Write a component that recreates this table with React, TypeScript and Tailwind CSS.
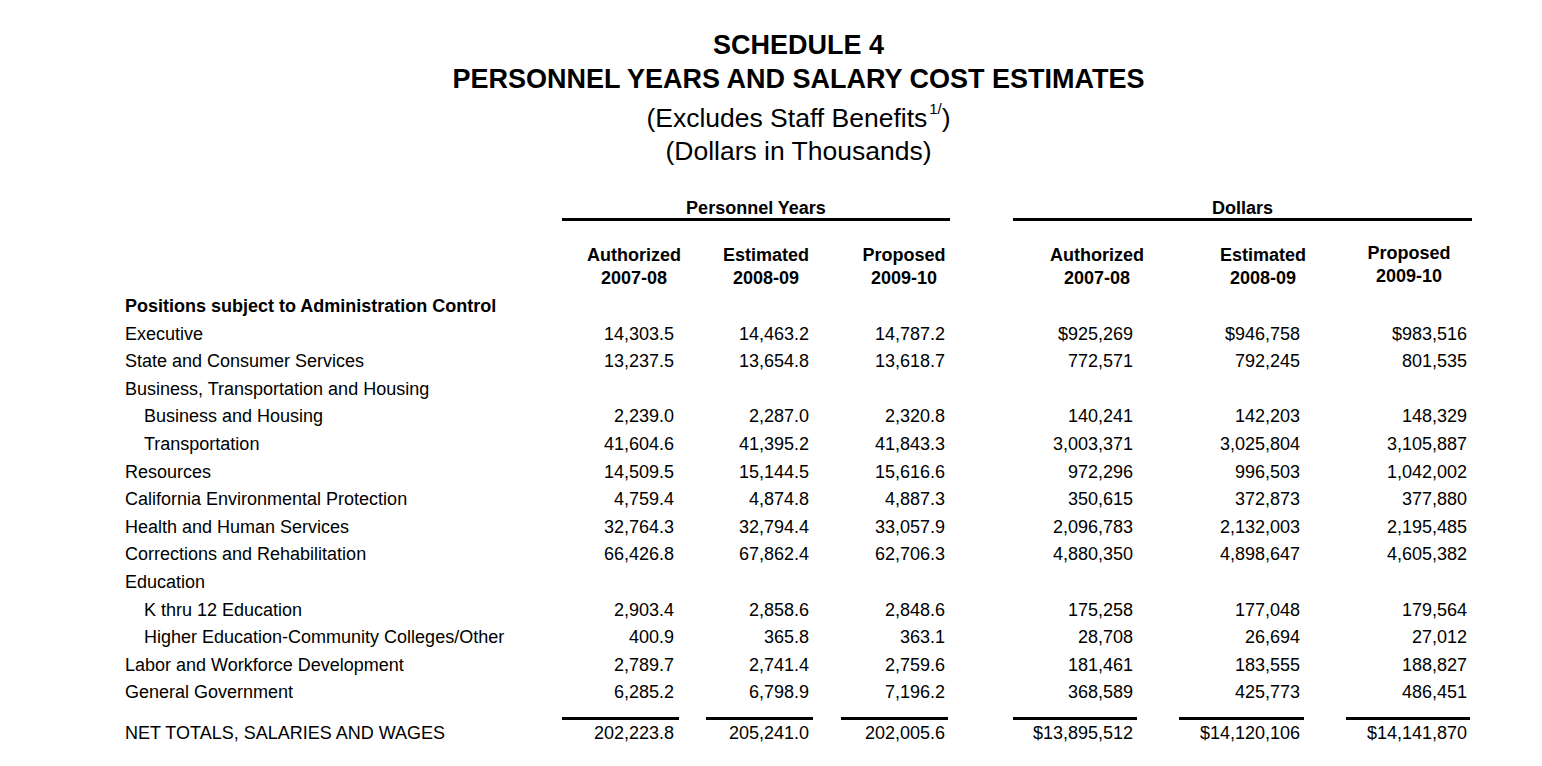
import React from "react";

interface Row {
	label: string;
	indent?: boolean;
	bold?: boolean;
	values?: string[];
}

const rows: Row[] = [
	{ label: "Positions subject to Administration Control", bold: true },
	{ label: "Executive", values: ["14,303.5", "14,463.2", "14,787.2", "$925,269", "$946,758", "$983,516"] },
	{ label: "State and Consumer Services", values: ["13,237.5", "13,654.8", "13,618.7", "772,571", "792,245", "801,535"] },
	{ label: "Business, Transportation and Housing" },
	{ label: "Business and Housing", indent: true, values: ["2,239.0", "2,287.0", "2,320.8", "140,241", "142,203", "148,329"] },
	{ label: "Transportation", indent: true, values: ["41,604.6", "41,395.2", "41,843.3", "3,003,371", "3,025,804", "3,105,887"] },
	{ label: "Resources", values: ["14,509.5", "15,144.5", "15,616.6", "972,296", "996,503", "1,042,002"] },
	{ label: "California Environmental Protection", values: ["4,759.4", "4,874.8", "4,887.3", "350,615", "372,873", "377,880"] },
	{ label: "Health and Human Services", values: ["32,764.3", "32,794.4", "33,057.9", "2,096,783", "2,132,003", "2,195,485"] },
	{ label: "Corrections and Rehabilitation", values: ["66,426.8", "67,862.4", "62,706.3", "4,880,350", "4,898,647", "4,605,382"] },
	{ label: "Education" },
	{ label: "K thru 12 Education", indent: true, values: ["2,903.4", "2,858.6", "2,848.6", "175,258", "177,048", "179,564"] },
	{ label: "Higher Education-Community Colleges/Other", indent: true, values: ["400.9", "365.8", "363.1", "28,708", "26,694", "27,012"] },
	{ label: "Labor and Workforce Development", values: ["2,789.7", "2,741.4", "2,759.6", "181,461", "183,555", "188,827"] },
	{ label: "General Government", values: ["6,285.2", "6,798.9", "7,196.2", "368,589", "425,773", "486,451"] },
];

const totals = ["202,223.8", "205,241.0", "202,005.6", "$13,895,512", "$14,120,106", "$14,141,870"];

// column geometry: margin before, width, right padding
const cols = [
	"ml-0 w-[117px] pr-[5px]",
	"ml-[27px] w-[107px] pr-[4px]",
	"ml-[28px] w-[107px] pr-[3px]",
	"ml-[65px] w-[124px] pr-[4px]",
	"ml-[42px] w-[125px] pr-[4px]",
	"ml-[42px] w-[124px] pr-[3px]",
];

const heads = [
	{ cls: "ml-[12px]", top: "Authorized", year: "2007-08" },
	{ cls: "ml-[12px]", top: "Estimated", year: "2008-09" },
	{ cls: "ml-[18px]", top: "Proposed", year: "2009-10" },
	{ cls: "ml-[73px]", top: "Authorized", year: "2007-08" },
	{ cls: "ml-[46px]", top: "Estimated", year: "2008-09" },
	{ cls: "ml-[26px] -mt-[2px]", top: "Proposed", year: "2009-10" },
];

const App = () => {
	return (
		<div
			className="min-h-screen w-full bg-white text-black"
			style={{ fontFamily: '"Liberation Sans", Arial, sans-serif' }}
		>
			<div className="ml-[125px] w-[1347px] pt-[28px]">
				<div className="text-center text-[27px] font-bold leading-[34px]">
					<div>SCHEDULE 4</div>
					<div>PERSONNEL YEARS AND SALARY COST ESTIMATES</div>
				</div>
				<div className="mt-[6px] text-center text-[26.5px] leading-[33px]">
					<div className="h-[33px]">
						(Excludes Staff Benefits
						<span className="relative -top-[13px] ml-[2px] text-[15px] leading-none">1/</span>)
					</div>
					<div>(Dollars in Thousands)</div>
				</div>

				<div className="mt-[31px] flex text-[18px] font-bold">
					<div className="w-[437px]" />
					<div className="w-[388px] border-b-[3px] border-black text-center leading-[19px]">
						Personnel Years
					</div>
					<div className="ml-[63px] w-[459px] border-b-[3px] border-black text-center leading-[19px]">
						Dollars
					</div>
				</div>

				<div className="mt-[23px] flex items-start text-[18px] font-bold leading-[23px]">
					<div className="w-[437px]" />
					{heads.map((h, i) => (
						<div key={i} className={`${h.cls} w-[120px] text-center`}>
							<div>{h.top}</div>
							<div>{h.year}</div>
						</div>
					))}
				</div>

				<div className="mt-[3px] text-[18px] leading-[27.6px]">
					{rows.map((r, i) => (
						<div key={i} className="flex h-[27.6px]">
							<div
								className={`w-[437px] ${r.indent ? "pl-[19px]" : ""} ${r.bold ? "font-bold" : ""}`}
							>
								{r.label}
							</div>
							{r.values &&
								r.values.map((v, j) => (
									<div key={j} className={`${cols[j]} text-right`}>
										{v}
									</div>
								))}
						</div>
					))}
				</div>

				<div className="mt-[10px] flex text-[18px] leading-[27.6px]">
					<div className="w-[437px] border-t-[3px] border-transparent">
						NET TOTALS, SALARIES AND WAGES
					</div>
					{totals.map((v, j) => (
						<div key={j} className={`${cols[j]} border-t-[3px] border-black text-right`}>
							{v}
						</div>
					))}
				</div>
			</div>
		</div>
	);
};

export default App;
